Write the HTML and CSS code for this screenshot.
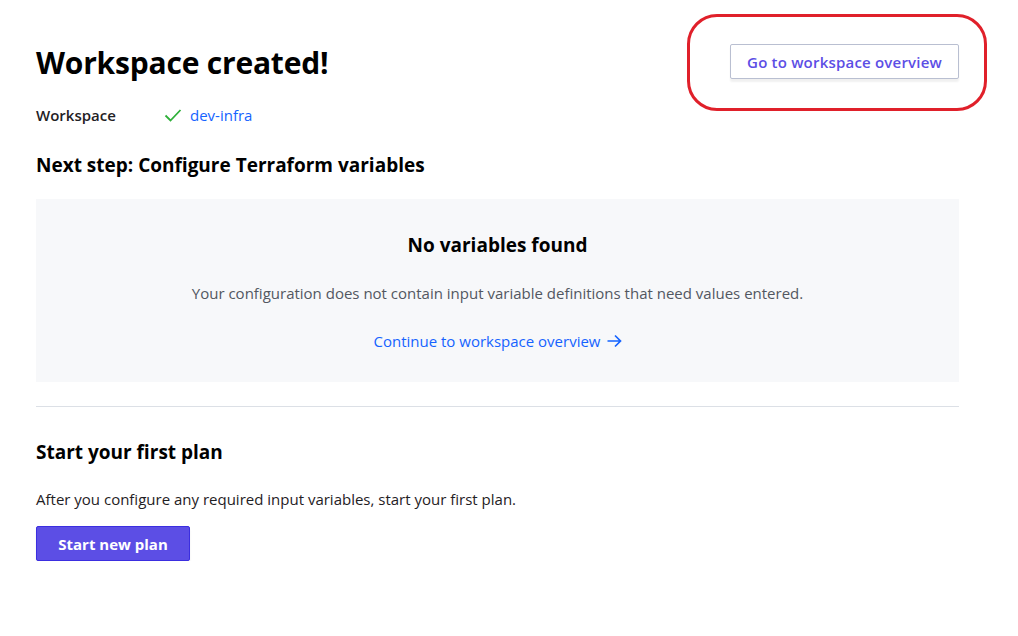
FILE: index.html
```html
<!DOCTYPE html>
<html>
<head>
  <meta charset="UTF-8">
  <title>Workspace created</title>
  <link rel="stylesheet" href="styles.css">
</head>
<body>
  <div class="page">
    <div class="header-container">
      <div>
        <h1>Workspace created!</h1>
        <div class="workspace-row">
          <span class="workspace-label">Workspace</span>
          <span class="workspace-name">
            <svg class="check-icon" width="18" height="16" viewBox="0 0 18 16">
              <path d="M1.5 8.5l5 5 10-10.5" fill="none" stroke="#2eb039" stroke-width="1.8"/>
            </svg>
            <a href="#">dev-infra</a>
          </span>
        </div>
      </div>
      <div class="overview-wrap">
        <button class="secondary-button">Go to workspace overview</button>
        <div class="highlight-ring"></div>
      </div>
    </div>

    <h2 class="step-title">Next step: Configure Terraform variables</h2>

    <div class="empty-state">
      <h3>No variables found</h3>
      <p>Your configuration does not contain input variable definitions that need values entered.</p>
      <a href="#" class="continue-link">Continue to workspace overview
        <svg width="16" height="16" viewBox="0 0 16 16">
          <path d="M1.5 8h13M9 2.5L14.5 8 9 13.5" fill="none" stroke="#1563ff" stroke-width="1.7"/>
        </svg>
      </a>
    </div>

    <hr class="divider">

    <h2 class="plan-title">Start your first plan</h2>
    <p class="plan-text">After you configure any required input variables, start your first plan.</p>
    <button class="primary-button">Start new plan</button>
  </div>
</body>
</html>
```

FILE: styles.css
```css
body {
  margin: 0;
  font-family: "Open Sans", "Noto Sans", Arial, sans-serif;
  color: #000;
  background-color: #fff;
}
.page {
  width: 923px;
  padding: 0 0 0 36px;
}
.header-container {
  display: flex;
  justify-content: space-between;
  align-items: flex-start;
}
h1 {
  margin: 42px 0 0;
  font-size: 30px;
  line-height: 42px;
  font-weight: 700;
  letter-spacing: -0.2px;
}
.workspace-row {
  display: flex;
  align-items: center;
  margin-top: 21px;
  font-size: 15px;
  line-height: 20px;
}
.workspace-label {
  width: 128px;
  font-weight: 600;
  color: #1f2124;
}
.workspace-name {
  display: flex;
  align-items: center;
  gap: 8px;
}
.workspace-name a {
  color: #1563ff;
  text-decoration: none;
}
.overview-wrap {
  position: relative;
  margin-top: 44px;
}
.secondary-button {
  font-family: inherit;
  font-size: 15px;
  font-weight: 600;
  letter-spacing: 0.2px;
  color: #5c4ee5;
  background-color: #fff;
  border: 1px solid #b9bfd1;
  border-radius: 2px;
  padding: 0 12px;
  height: 35px;
  width: 229px;
  box-shadow: 0 3px 2px rgba(0, 0, 0, 0.06);
  cursor: pointer;
}
.highlight-ring {
  position: absolute;
  left: -43px;
  top: -30px;
  width: 294px;
  height: 91px;
  border: 3px solid #e0202a;
  border-radius: 30px;
  pointer-events: none;
}
.step-title {
  margin: 27px 0 0;
  font-size: 19px;
  line-height: 26px;
  font-weight: 700;
}
.empty-state {
  margin-top: 21px;
  background-color: #f7f8fa;
  height: 183px;
  display: flex;
  flex-direction: column;
  align-items: center;
  box-sizing: border-box;
  padding-top: 33px;
}
.empty-state h3 {
  margin: 0;
  font-size: 19px;
  line-height: 26px;
  font-weight: 700;
}
.empty-state p {
  margin: 25px 0 0;
  font-size: 15px;
  line-height: 20px;
  color: #525761;
}
.continue-link {
  margin-top: 28px;
  display: flex;
  align-items: center;
  gap: 5px;
  font-size: 15px;
  line-height: 20px;
  color: #1563ff;
  text-decoration: none;
}
.divider {
  margin: 24px 0 0;
  border: none;
  border-top: 1px solid #dce0e6;
}
.plan-title {
  margin: 32px 0 0;
  font-size: 19px;
  line-height: 26px;
  font-weight: 700;
}
.plan-text {
  margin: 24px 0 0;
  font-size: 15px;
  line-height: 20px;
  color: #1f2124;
}
.primary-button {
  margin-top: 17px;
  font-family: inherit;
  font-size: 15px;
  font-weight: 700;
  color: #fff;
  background-color: #5c4ee5;
  border: 1px solid #3b2ee0;
  border-radius: 2px;
  height: 35px;
  width: 154px;
  box-shadow: 0 3px 2px rgba(0, 0, 0, 0.08);
  cursor: pointer;
}
```
